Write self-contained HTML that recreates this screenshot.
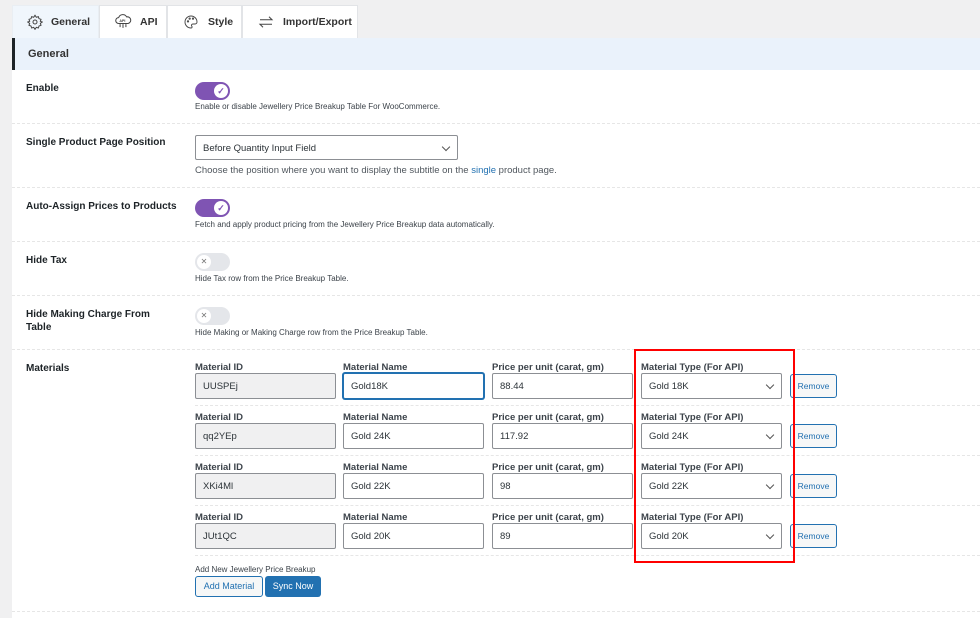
<!DOCTYPE html>
<html><head><meta charset="utf-8"><style>
*{box-sizing:border-box;margin:0;padding:0}
body{width:980px;height:618px;overflow:hidden;background:#f0f0f1;font-family:"Liberation Sans",sans-serif;color:#1d2327;position:relative}
.a{position:absolute}
.tab{position:absolute;top:5px;height:33px;background:#fff;border:1px solid #e2e4e7;border-bottom:none;font-size:10.5px;font-weight:bold;color:#333;display:flex;align-items:center;gap:8px;padding-left:14px}
.lbl{position:absolute;left:26px;font-size:10px;font-weight:bold;color:#1d2327;line-height:13px}
.desc{position:absolute;left:195px;font-size:8px;color:#3c434a}
.sep{position:absolute;left:12px;right:0;border-top:1px dashed #e6e6e6}
.tog{position:absolute;left:195px;width:35px;height:18px;border-radius:9px}
.on{background:#7f54b3}
.on::after{content:"✓";position:absolute;right:2px;top:2px;width:14px;height:14px;border-radius:50%;background:#fff;color:#7f54b3;font-size:9px;font-weight:bold;text-align:center;line-height:14px}
.off{background:#e4e6ea}
.off::after{content:"✕";position:absolute;left:2px;top:2px;width:14px;height:14px;border-radius:50%;background:#fff;color:#777;font-size:8px;text-align:center;line-height:14px}
.fl{position:absolute;font-size:9.5px;font-weight:bold;color:#3c434a}
.in{position:absolute;height:26px;width:141px;border:1px solid #8c8f94;background:#fff;font-size:9.5px;color:#2c3338;padding-left:7px;padding-top:2px;line-height:22px;border-radius:2px}
.ro{background:#f0f0f1}
.sel::after{content:"";position:absolute;right:8px;top:8px;width:5px;height:5px;border-right:1.3px solid #555;border-bottom:1.3px solid #555;transform:rotate(45deg)}
.rm{position:absolute;left:790px;width:47px;height:24px;border:1px solid #2271b1;background:#f6f7f7;color:#2271b1;font-size:8.5px;text-align:center;line-height:22px;border-radius:3px}
</style></head><body>
<div class="a" style="left:12px;top:38px;width:968px;height:580px;background:#fff"></div>
<div class="tab" style="left:12px;width:87px;background:#f0f6fc;border-color:#e9eef3"><svg width="16" height="16" viewBox="0 0 24 24" fill="none" stroke="#444" stroke-width="1.5"><circle cx="12" cy="12" r="3"/><path d="M12 2l2 3 3-1 1 3 3 1-1 3 3 1-3 2 1 3-3 1-1 3-3-1-2 3-2-3-3 1-1-3-3-1 1-3-3-2 3-1-1-3 3-1 1-3 3 1z"/></svg>General</div>
<div class="tab" style="left:99px;width:68px"><svg width="18" height="16" viewBox="0 0 24 22" fill="none" stroke="#444" stroke-width="1.4"><path d="M6 13a4 4 0 010-8 6 6 0 0111-1 4 4 0 012 9z"/><path d="M8 14v4M12 14v5M16 14v4"/><text x="7" y="11" font-size="5" fill="#444" stroke="none">API</text></svg>API</div>
<div class="tab" style="left:167px;width:75px"><svg width="18" height="16" viewBox="0 0 24 24" fill="none" stroke="#444" stroke-width="1.4"><path d="M12 3a9 9 0 100 18c2 0 2-2 1-3s0-3 2-3h3a3 3 0 003-3 9 9 0 00-9-9z"/><circle cx="7.5" cy="11" r="1"/><circle cx="10" cy="7" r="1"/><circle cx="15" cy="7" r="1"/></svg>Style</div>
<div class="tab" style="left:242px;width:116px"><svg width="18" height="14" viewBox="0 0 24 18" fill="none" stroke="#444" stroke-width="1.4"><path d="M4 6h16l-4-4M20 12H4l4 4"/></svg>Import/Export</div>
<div class="a" style="left:12px;top:38px;width:968px;height:32px;background:#eaf2fb;border-left:3px solid #1d2327"></div>
<div class="a" style="left:28px;top:48px;font-size:11px;font-weight:bold;color:#333">General</div>

<div class="lbl" style="top:82px">Enable</div>
<div class="tog on" style="top:82px"></div>
<div class="desc" style="top:102px">Enable or disable Jewellery Price Breakup Table For WooCommerce.</div>
<div class="sep" style="top:123px"></div>

<div class="lbl" style="top:136px">Single Product Page Position</div>
<div class="in sel" style="left:195px;top:135px;width:263px;height:25px;font-size:9.5px">Before Quantity Input Field</div>
<div class="a" style="left:195px;top:165px;font-size:9.5px;color:#50575e">Choose the position where you want to display the subtitle on the <span style="color:#2271b1">single</span> product page.</div>
<div class="sep" style="top:187px"></div>

<div class="lbl" style="top:200px">Auto-Assign Prices to Products</div>
<div class="tog on" style="top:199px"></div>
<div class="desc" style="top:220px">Fetch and apply product pricing from the Jewellery Price Breakup data automatically.</div>
<div class="sep" style="top:241px"></div>

<div class="lbl" style="top:254px">Hide Tax</div>
<div class="tog off" style="top:253px"></div>
<div class="desc" style="top:274px">Hide Tax row from the Price Breakup Table.</div>
<div class="sep" style="top:295px"></div>

<div class="lbl" style="top:308px">Hide Making Charge From<br>Table</div>
<div class="tog off" style="top:307px"></div>
<div class="desc" style="top:328px">Hide Making or Making Charge row from the Price Breakup Table.</div>
<div class="sep" style="top:349px"></div>

<div class="lbl" style="top:362px">Materials</div>

<div class="fl" style="left:195px;top:362px">Material ID</div><div class="fl" style="left:343px;top:362px">Material Name</div><div class="fl" style="left:492px;top:362px">Price per unit (carat, gm)</div><div class="fl" style="left:641px;top:362px">Material Type (For API)</div>
<div class="in ro" style="left:195px;top:373px">UUSPEj</div><div class="in" style="left:343px;top:373px;border-color:#2271b1;box-shadow:0 0 0 1px #2271b1">Gold18K</div><div class="in" style="left:492px;top:373px">88.44</div><div class="in sel" style="left:641px;top:373px">Gold 18K</div><div class="rm" style="top:374px">Remove</div>
<div class="sep" style="left:195px;top:405px"></div>

<div class="fl" style="left:195px;top:412px">Material ID</div><div class="fl" style="left:343px;top:412px">Material Name</div><div class="fl" style="left:492px;top:412px">Price per unit (carat, gm)</div><div class="fl" style="left:641px;top:412px">Material Type (For API)</div>
<div class="in ro" style="left:195px;top:423px">qq2YEp</div><div class="in" style="left:343px;top:423px">Gold 24K</div><div class="in" style="left:492px;top:423px">117.92</div><div class="in sel" style="left:641px;top:423px">Gold 24K</div><div class="rm" style="top:424px">Remove</div>
<div class="sep" style="left:195px;top:455px"></div>

<div class="fl" style="left:195px;top:462px">Material ID</div><div class="fl" style="left:343px;top:462px">Material Name</div><div class="fl" style="left:492px;top:462px">Price per unit (carat, gm)</div><div class="fl" style="left:641px;top:462px">Material Type (For API)</div>
<div class="in ro" style="left:195px;top:473px">XKi4Ml</div><div class="in" style="left:343px;top:473px">Gold 22K</div><div class="in" style="left:492px;top:473px">98</div><div class="in sel" style="left:641px;top:473px">Gold 22K</div><div class="rm" style="top:474px">Remove</div>
<div class="sep" style="left:195px;top:505px"></div>

<div class="fl" style="left:195px;top:512px">Material ID</div><div class="fl" style="left:343px;top:512px">Material Name</div><div class="fl" style="left:492px;top:512px">Price per unit (carat, gm)</div><div class="fl" style="left:641px;top:512px">Material Type (For API)</div>
<div class="in ro" style="left:195px;top:523px">JUt1QC</div><div class="in" style="left:343px;top:523px">Gold 20K</div><div class="in" style="left:492px;top:523px">89</div><div class="in sel" style="left:641px;top:523px">Gold 20K</div><div class="rm" style="top:524px">Remove</div>
<div class="sep" style="left:195px;top:555px"></div>

<div class="a" style="left:634px;top:349px;width:161px;height:214px;border:2px solid #f00"></div>

<div class="desc" style="top:565px">Add New Jewellery Price Breakup</div>
<div class="a" style="left:195px;top:576px;width:68px;height:21px;border:1px solid #2271b1;background:#f6f7f7;color:#2271b1;font-size:9px;text-align:center;line-height:19px;border-radius:3px">Add Material</div>
<div class="a" style="left:265px;top:576px;width:56px;height:21px;background:#2271b1;color:#fff;font-size:9px;text-align:center;line-height:21px;border-radius:3px">Sync Now</div>
<div class="sep" style="top:611px"></div>
</body></html>
